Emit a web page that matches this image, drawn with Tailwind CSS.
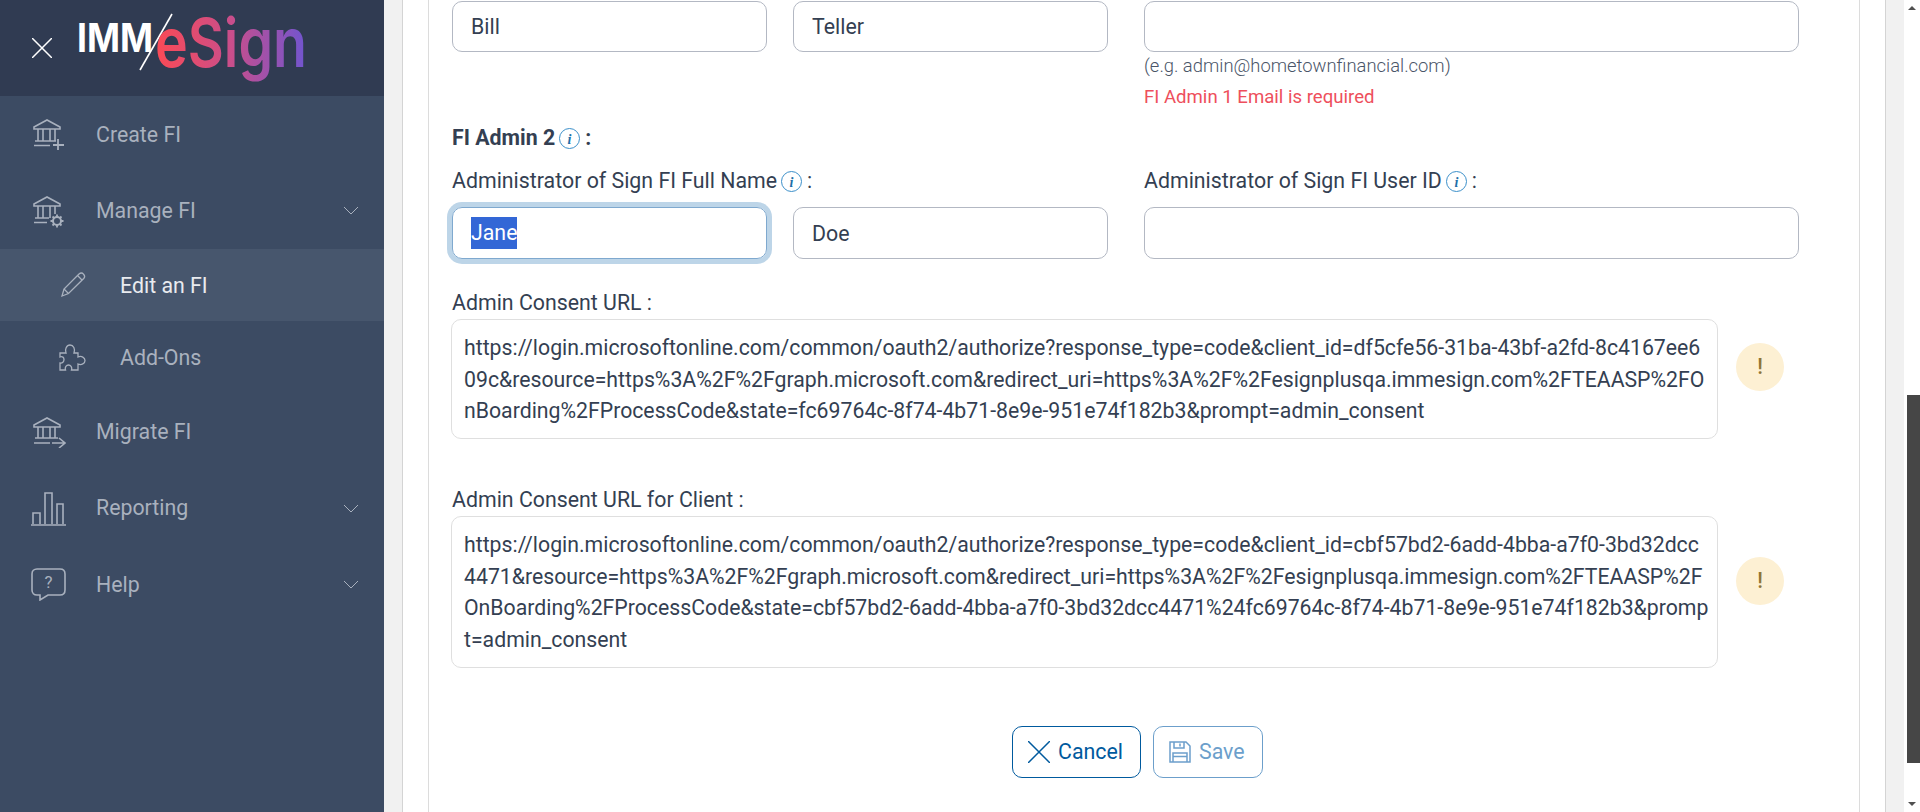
<!DOCTYPE html>
<html>
<head>
<meta charset="utf-8">
<title>IMM eSign</title>
<script src="https://cdn.jsdelivr.net/npm/@tailwindcss/browser@4"></script>
</head>
<body class="font-['Roboto',sans-serif] text-[21.33px] text-[#343f52]">
<div class="flex h-[812px] w-[1920px] overflow-hidden">

  <!-- Sidebar -->
  <aside class="w-[384px] shrink-0 bg-[#3c4b63] text-[#a9b1be]">
    <div class="h-[96px] bg-[#303b52] flex items-center pl-[32px]">
      <svg width="20" height="20" viewBox="0 0 20 20" fill="none" stroke="#fff" stroke-width="1.5"><path d="M0 0L20 20M20 0L0 20"/></svg>
      <svg class="ml-[25px]" width="280" height="96" viewBox="0 0 280 96">
        <defs><linearGradient id="logo" x1="0" x2="1" y1="0" y2="0"><stop offset="0" stop-color="#fb4a55"/><stop offset="0.5" stop-color="#c94e8b"/><stop offset="1" stop-color="#6f55d0"/></linearGradient></defs>
        <text x="0" y="52" fill="#fff" font-family="Inter" font-weight="700" font-size="40" textLength="76" lengthAdjust="spacingAndGlyphs">IMM</text>
        <path d="M95 14L63 70" stroke="#fff" stroke-width="1.6"/>
        <text x="78" y="67" fill="url(#logo)" font-family="Inter" font-weight="600" font-size="68" textLength="152" lengthAdjust="spacingAndGlyphs">eSign</text>
      </svg>
    </div>
    <nav>
      <a class="flex items-center h-[76.5px] pl-[32px]">
        <svg class="w-[32px] h-[34px]" viewBox="0 0 32 34" fill="none" stroke="currentColor" stroke-width="1.6"><path d="M2 10L15 3L28 10V12H2Z"/><path d="M6 12V24M11 12V24M18 12V24M23 12V24M3 24H24M2 28.500H18"/><path d="M26 22V33M21 28H32" stroke-width="1.800"/></svg>
        <span class="ml-[32px] pt-[1px]">Create FI</span>
      </a>
      <a class="flex items-center h-[76.5px] pl-[32px]">
        <svg class="w-[32px] h-[34px]" viewBox="0 0 32 34" fill="none" stroke="currentColor" stroke-width="1.6"><path d="M2 10L15 3L28 10V12H2Z"/><path d="M6 12V24M11 12V24M18 12V24M23 12V20M3 24H17M2 28.500H15"/><circle cx="25" cy="27" r="4" stroke-width="2"/><path d="M25 20.500V23M25 31V33.500M18.500 27H21M29 27H31.500M20.500 22.500L22 24M28 30L29.500 31.500M29.500 22.500L28 24M22 30L20.500 31.500" stroke-width="1.800"/></svg>
        <span class="ml-[32px] pt-[1px]">Manage FI</span>
        <svg class="ml-auto mr-[25px] w-[16px] h-[9px]" viewBox="0 0 16 9" fill="none" stroke="currentColor" stroke-width="1"><path d="M1 1L8 8L15 1"/></svg>
      </a>
      <a class="flex items-center h-[72px] pl-[60px] bg-[#47566d] text-[#e9ebef]">
        <svg class="w-[26px] h-[26px] text-[#a9b1be]" viewBox="0 0 26 26" fill="none" stroke="currentColor" stroke-width="1.300"><path d="M2 24L4 17L19 2C20.500 .8 22.500 1 23.500 2.200C24.800 3.500 24.800 5.300 23.700 6.500L8.500 21.500Z"/><path d="M4 17L8.500 21.500M17.500 3.500L22 8"/></svg>
        <span class="ml-[34px] pt-[1px]">Edit an FI</span>
      </a>
      <a class="flex items-center h-[72px] pl-[59px]">
        <svg class="w-[27px] h-[27px]" viewBox="0 0 27 27" fill="none" stroke="currentColor" stroke-width="1.300"><path d="M1 9H7C5.500 5.500 7.500 1 11 1C14.500 1 16.500 5 15 9H19V13C22.500 11.500 26 13.500 26 16.500C26 19.500 22.500 21.500 19 20V26H12.500C13.500 23 11.500 21 9.500 21C7.500 21 5.500 23 6.500 26H1V19C3.500 19.500 5 17.500 5 15.500C5 13.500 3.500 12 1 13Z"/></svg>
        <span class="ml-[34px] pt-[1px]">Add-Ons</span>
      </a>
      <a class="flex items-center h-[77px] pl-[32px]">
        <svg class="w-[34px] h-[32px]" viewBox="0 0 34 32" fill="none" stroke="currentColor" stroke-width="1.6"><path d="M2 9L15 2L28 9V11H2Z"/><path d="M6 11V22M11 11V22M18 11V22M23 11V22M3 22H26M2 27H18M20 27H32M27 22L33 27L27 32"/></svg>
        <span class="ml-[30px] pt-[1px]">Migrate FI</span>
      </a>
      <a class="flex items-center h-[76px] pl-[31px]">
        <svg class="w-[35px] h-[35px]" viewBox="0 0 35 35" fill="none" stroke="currentColor" stroke-width="1.6"><path d="M0 34H35M2 33V22H9V33M14 33V2H21V33M26 33V13H32V33"/></svg>
        <span class="ml-[30px]">Reporting</span>
        <svg class="ml-auto mr-[25px] w-[16px] h-[9px]" viewBox="0 0 16 9" fill="none" stroke="currentColor" stroke-width="1"><path d="M1 1L8 8L15 1"/></svg>
      </a>
      <a class="flex items-center h-[76px] pl-[31px]">
        <svg class="w-[35px] h-[33px]" viewBox="0 0 35 33" fill="none" stroke="currentColor" stroke-width="1.600"><path d="M6 1H29C32 1 34 3 34 6V22C34 25 32 27 29 27H17L9 32V27H6C3 27 1 25 1 22V6C1 3 3 1 6 1Z"/><text x="17.500" y="20" text-anchor="middle" font-family="Roboto" font-size="17" fill="currentColor" stroke="none">?</text></svg>
        <span class="ml-[30px] pt-[2px]">Help</span>
        <svg class="ml-auto mr-[25px] w-[16px] h-[9px]" viewBox="0 0 16 9" fill="none" stroke="currentColor" stroke-width="1"><path d="M1 1L8 8L15 1"/></svg>
      </a>
    </nav>
  </aside>

  <!-- Main -->
  <main class="flex-1 bg-[#f1f1f1] px-[18px]">
    <div class="h-full bg-white border-x border-[#d4d4d4] pl-[25px] pr-[25px]">
      <div class="h-full border-x border-[#dcdcdc] pl-[23px] pt-[1px]">

        <div class="grid grid-cols-[315px_315px_665px] gap-x-[26px]">
          <input class="h-[51px] border border-[#b3b8c3] rounded-[10px] pl-[18px] outline-none" value="Bill">
          <input class="h-[51px] border border-[#b3b8c3] rounded-[10px] pl-[18px] outline-none" value="Teller">
          <div class="ml-[10px]">
            <input class="w-full h-[51px] border border-[#b3b8c3] rounded-[10px] outline-none">
            <p class="font-light text-[18.4px] leading-[24px] text-[#4a5568] mt-[2px]">(e.g. admin@hometownfinancial.com)</p>
            <p class="text-[#ee4f5c] text-[18.6px] leading-[24px] mt-[7px]">FI Admin 1 Email is required</p>
          </div>
        </div>

        <div class="flex items-center font-bold h-[32px] mt-[13px]">FI Admin 2<svg class="ml-[4px] mr-[5px] w-[21px] h-[21px]" viewBox="0 0 21 21"><circle cx="10.500" cy="10.500" r="10" fill="none" stroke="#3b8fc9"/><text x="10.500" y="15.500" text-anchor="middle" font-family="Liberation Serif" font-style="italic" font-weight="700" font-size="14" fill="#1f6fa8">i</text></svg>:</div>

        <div class="grid grid-cols-[656px_655px] gap-x-[36px] mt-[11px]">
          <div class="flex items-center h-[32px]">Administrator of Sign FI Full Name<svg class="ml-[4px] mr-[5px] w-[21px] h-[21px]" viewBox="0 0 21 21"><circle cx="10.500" cy="10.500" r="10" fill="none" stroke="#3b8fc9"/><text x="10.500" y="15.500" text-anchor="middle" font-family="Liberation Serif" font-style="italic" font-weight="700" font-size="14" fill="#1f6fa8">i</text></svg>:</div>
          <div class="flex items-center h-[32px]">Administrator of Sign FI User ID<svg class="ml-[4px] mr-[5px] w-[21px] h-[21px]" viewBox="0 0 21 21"><circle cx="10.500" cy="10.500" r="10" fill="none" stroke="#3b8fc9"/><text x="10.500" y="15.500" text-anchor="middle" font-family="Liberation Serif" font-style="italic" font-weight="700" font-size="14" fill="#1f6fa8">i</text></svg>:</div>
        </div>

        <div class="grid grid-cols-[315px_315px_655px] gap-x-[26px] mt-[10px]">
          <div class="h-[52px] border border-[#7fa9cf] rounded-[10px] pl-[18px] flex items-center shadow-[0_0_0_5px_#bdd5e8]"><span class="bg-[#3367d6] text-white leading-[32px]">Jane</span></div>
          <input class="h-[52px] border border-[#b3b8c3] rounded-[10px] pl-[18px] outline-none" value="Doe">
          <input class="h-[52px] ml-[10px] w-[655px] border border-[#b3b8c3] rounded-[10px] outline-none">
        </div>

        <div class="h-[32px] leading-[32px] mt-[28px]">Admin Consent URL :</div>
        <div class="flex">
          <div class="w-[1267px] h-[120px] -ml-[1px] border border-[#dfdfdf] rounded-[10px] pl-[12px] py-[12px] text-[21.25px] leading-[31.5px] whitespace-nowrap">https://login.microsoftonline.com/common/oauth2/authorize?response_type=code&amp;client_id=df5cfe56-31ba-43bf-a2fd-8c4167ee6<br>09c&amp;resource=https%3A%2F%2Fgraph.microsoft.com&amp;redirect_uri=https%3A%2F%2Fesignplusqa.immesign.com%2FTEAASP%2FO<br>nBoarding%2FProcessCode&amp;state=fc69764c-8f74-4b71-8e9e-951e74f182b3&amp;prompt=admin_consent</div>
          <div class="ml-[18px] mt-[24px] w-[48px] h-[48px] rounded-full bg-[#fdf0d3] text-[#8f7436] font-medium flex items-center justify-center">!</div>
        </div>

        <div class="h-[32px] leading-[32px] mt-[45px]">Admin Consent URL for Client :</div>
        <div class="flex">
          <div class="w-[1267px] h-[152px] -ml-[1px] border border-[#dfdfdf] rounded-[10px] pl-[12px] py-[12px] text-[21.25px] leading-[31.5px] whitespace-nowrap">https://login.microsoftonline.com/common/oauth2/authorize?response_type=code&amp;client_id=cbf57bd2-6add-4bba-a7f0-3bd32dcc<br>4471&amp;resource=https%3A%2F%2Fgraph.microsoft.com&amp;redirect_uri=https%3A%2F%2Fesignplusqa.immesign.com%2FTEAASP%2F<br>OnBoarding%2FProcessCode&amp;state=cbf57bd2-6add-4bba-a7f0-3bd32dcc4471%24fc69764c-8f74-4b71-8e9e-951e74f182b3&amp;promp<br>t=admin_consent</div>
          <div class="ml-[18px] mt-[41px] w-[48px] h-[48px] rounded-full bg-[#fdf0d3] text-[#8f7436] font-medium flex items-center justify-center">!</div>
        </div>

        <div class="flex pl-[560px] gap-x-[12px] mt-[58px]">
          <button class="w-[129px] h-[52px] border border-[#005a9e] rounded-[10px] text-[#005a9e] flex items-center pl-[15px]">
            <svg class="w-[22px] h-[22px]" viewBox="0 0 22 22" fill="none" stroke="currentColor" stroke-width="1.500"><path d="M0 0L22 22M22 0L0 22"/></svg>
            <span class="ml-[8px]">Cancel</span>
          </button>
          <button class="w-[110px] h-[52px] border border-[#6c9fcb] rounded-[10px] text-[#6c9fcb] flex items-center pl-[15px]">
            <svg class="w-[22px] h-[22px]" viewBox="0 0 22 22" fill="none" stroke="currentColor" stroke-width="1.500"><path d="M1 1H17L21 5V21H1Z"/><path d="M5 1V7H15V1M11 2.500V5.500M4 21V12H18V21M4 15.500H18" /></svg>
            <span class="ml-[8px]">Save</span>
          </button>
        </div>

      </div>
    </div>
  </main>

  <!-- Scrollbar -->
  <div class="w-[16px] shrink-0 bg-white flex flex-col">
    <div class="h-[395px] flex justify-center"><div class="mt-[6px] w-0 h-0 border-x-[4px] border-x-transparent border-b-[4px] border-b-[#505050]"></div></div>
    <div class="h-[368px] ml-[3px] bg-[#464646]"></div>
    <div class="flex-1 flex justify-center items-end pb-[6px]"><div class="w-0 h-0 border-x-[4px] border-x-transparent border-t-[4px] border-t-[#505050]"></div></div>
  </div>
</div>
</body>
</html>
